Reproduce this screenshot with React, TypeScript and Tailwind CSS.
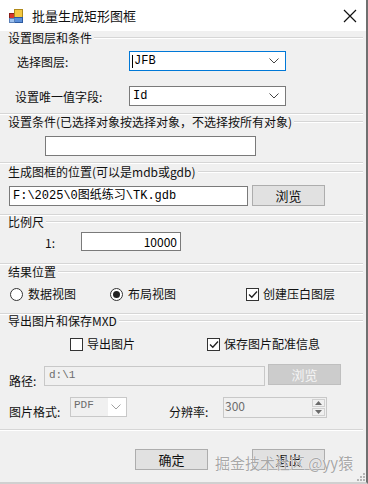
import React from 'react';

const cjk = '"Noto Sans CJK SC", "Noto Sans", sans-serif';
const mono = '"Liberation Mono", "Noto Sans CJK SC", monospace';

const Chevron = ({ color = '#444' }: { color?: string }) => (
  <svg width="10" height="6" viewBox="0 0 10 6" className="shrink-0">
    <path d="M0.5 0.5 L5 5 L9.5 0.5" fill="none" stroke={color} strokeWidth="1" />
  </svg>
);

const Header = ({ title, h = 14 }: { title: string; h?: number }) => (
  <div className="flex items-center" style={{ height: h }}>
    <span className="ml-[8px] mr-[2px] text-[12px] leading-none text-[#111] whitespace-nowrap">{title}</span>
    <div className="flex-1 h-[2px] border-t border-[#d6d6d6] border-b border-b-white mr-[3px]" />
  </div>
);

const Rule = () => <div className="h-[2px] border-t border-[#d6d6d6] border-b border-b-white mr-[3px]" />;

const Radio = ({ on }: { on?: boolean }) => (
  <span className="w-[13px] h-[13px] rounded-full border border-[#333] bg-white flex items-center justify-center shrink-0">
    {on && <span className="w-[7px] h-[7px] rounded-full bg-[#222]" />}
  </span>
);

const Check = ({ on }: { on?: boolean }) => (
  <span className="w-[13px] h-[13px] border border-[#333] bg-white flex items-center justify-center shrink-0">
    {on && (
      <svg width="10" height="9" viewBox="0 0 10 9">
        <path d="M1 4.5 L3.8 7.3 L9 1.5" fill="none" stroke="#222" strokeWidth="1.3" />
      </svg>
    )}
  </span>
);

const Button = ({ label, disabled, className = '' }: { label: string; disabled?: boolean; className?: string }) => (
  <div
    className={`w-[73px] h-[21px] flex items-center justify-center text-[13px] leading-none border ${
      disabled ? 'bg-[#cccccc] border-[#bfbfbf] text-[#f4f4f4]' : 'bg-[#e1e1e1] border-[#adadad] text-[#111]'
    } ${className}`}
  >
    {label}
  </div>
);

export default function App() {
  return (
    <div
      className="w-[368px] h-[484px] bg-[#f0f0f0] flex flex-col relative border-r-2 border-r-[#707070] border-b-2 border-b-[#d0d0d0] overflow-hidden"
      style={{ fontFamily: cjk }}
    >
      {/* title bar */}
      <div className="h-[31px] bg-white flex items-center shrink-0">
        <svg width="14" height="14" viewBox="0 0 14 14" className="ml-[9px]">
          <rect x="0.5" y="4.5" width="5" height="5" fill="#d9362b" stroke="#8a1f18" />
          <rect x="5.5" y="0.5" width="8" height="8" fill="#f4c842" stroke="#b08a1a" />
          <rect x="5.5" y="8.5" width="8" height="5" fill="#5b8fd9" stroke="#2d5aa0" />
          <rect x="0.5" y="9.5" width="5" height="4" fill="#9ec2ef" stroke="#5a80b8" />
        </svg>
        <span className="ml-[9px] text-[13px] leading-none text-[#111]">批量生成矩形图框</span>
        <svg width="14" height="14" viewBox="0 0 14 14" className="ml-auto mr-[9px]">
          <path d="M1 1 L13 13 M13 1 L1 13" stroke="#111" strokeWidth="1.2" />
        </svg>
      </div>

      <Header title="设置图层和条件" />

      <div className="flex items-center h-[20px] mt-[6px]">
        <span className="ml-[17px] mt-[2px] w-[112px] text-[12px] leading-none text-[#111]">选择图层:</span>
        <div className="w-[157px] h-[20px] bg-white border border-[#0078d7] flex items-center pl-[2px] pr-[6px]">
          <span className="w-[1px] h-[13px] bg-black mr-[1px]" />
          <span className="text-[12px] leading-none text-black" style={{ fontFamily: mono }}>JFB</span>
          <span className="ml-auto"><Chevron /></span>
        </div>
      </div>

      <div className="flex items-center h-[20px] mt-[15px]">
        <span className="ml-[15px] mt-[2px] w-[114px] text-[12px] leading-none text-[#111]">设置唯一值字段:</span>
        <div className="w-[157px] h-[20px] bg-white border border-[#7a7a7a] flex items-center pl-[3px] pr-[6px]">
          <span className="text-[12px] leading-none text-black" style={{ fontFamily: mono }}>Id</span>
          <span className="ml-auto"><Chevron /></span>
        </div>
      </div>

      <div className="mt-[7px]"><Rule /></div>
      <Header title="设置条件(已选择对象按选择对象，不选择按所有对象)" />

      <div className="mt-[7px] ml-[45px] w-[211px] h-[20px] bg-white border border-[#7a7a7a]" />

      <div className="mt-[6px]"><Rule /></div>
      <Header title="生成图框的位置(可以是mdb或gdb)" h={16} />

      <div className="flex items-start h-[21px] mt-[5px]">
        <div className="ml-[9px] mt-[1px] w-[239px] h-[20px] bg-white border border-[#7a7a7a] flex items-center pl-[3px]">
          <span className="text-[12px] leading-none text-black whitespace-nowrap" style={{ fontFamily: mono }}>
            F:\2025\0图纸练习\TK.gdb
          </span>
        </div>
        <Button label="浏览" className="ml-[4px]" />
      </div>

      <div className="mt-[8px]"><Rule /></div>
      <Header title="比例尺" h={12} />

      <div className="flex items-center h-[19px] mt-[4px]">
        <span className="ml-[45px] mt-[3px] w-[36px] text-[12px] leading-none text-[#111]">1:</span>
        <div className="w-[100px] h-[19px] bg-white border border-[#7a7a7a] flex items-center justify-end pr-[3px]">
          <span className="text-[12px] leading-none text-black">10000</span>
        </div>
      </div>

      <div className="mt-[12px]"><Rule /></div>
      <Header title="结果位置" />

      <div className="flex items-center h-[14px] mt-[8px] text-[12px] leading-none text-[#111]">
        <span className="ml-[10px]"><Radio /></span>
        <span className="ml-[5px]">数据视图</span>
        <span className="ml-[34px]"><Radio on /></span>
        <span className="ml-[5px]">布局视图</span>
        <span className="ml-[70px]"><Check on /></span>
        <span className="ml-[4px]">创建压白图层</span>
      </div>

      <div className="mt-[12px]"><Rule /></div>
      <Header title="导出图片和保存MXD" h={12} />

      <div className="flex items-center h-[14px] mt-[10px] text-[12px] leading-none text-[#111]">
        <span className="ml-[70px]"><Check /></span>
        <span className="ml-[4px]">导出图片</span>
        <span className="ml-[72px]"><Check on /></span>
        <span className="ml-[4px]">保存图片配准信息</span>
      </div>

      <div className="flex items-start h-[22px] mt-[13px]">
        <span className="ml-[9px] mt-[11px] w-[35px] text-[12px] leading-none text-[#111]">路径:</span>
        <div className="mt-[2px] w-[221px] h-[20px] bg-[#f0f0f0] border border-[#c8c8c8] flex items-start pl-[4px] pt-[3px]">
          <span className="text-[11px] leading-none text-[#6d6d6d]" style={{ fontFamily: mono }}>d:\1</span>
        </div>
        <Button label="浏览" disabled className="ml-[3px]" />
      </div>

      <div className="flex items-center h-[20px] mt-[11px]">
        <span className="ml-[9px] mt-[10px] w-[61px] text-[12px] leading-none text-[#111]">图片格式:</span>
        <div className="w-[57px] h-[20px] bg-white border border-[#c8c8c8] flex items-center pr-[5px]">
          <span className="h-full w-[37px] bg-[#f0f0f0] flex items-start pl-[3px] pt-[2px]">
            <span className="text-[11px] leading-none text-[#6d6d6d]" style={{ fontFamily: mono }}>PDF</span>
          </span>
          <span className="ml-auto"><Chevron color="#a0a0a0" /></span>
        </div>
        <span className="ml-[42px] mt-[10px] w-[54px] text-[12px] leading-none text-[#111]">分辨率:</span>
        <div className="w-[104px] h-[21px] bg-[#f0f0f0] border border-[#c8c8c8] flex items-start">
          <span className="ml-[1px] mt-[2px] text-[12px] leading-none text-[#6d6d6d]">300</span>
          <div className="ml-auto mr-[1px] mt-[1px] w-[13px] h-[17px] flex flex-col">
            <div className="h-[8px] border border-[#d0d0d0] flex items-center justify-center">
              <svg width="7" height="4" viewBox="0 0 7 4"><path d="M0 4 L3.5 0 L7 4 Z" fill="#6a6a6a" /></svg>
            </div>
            <div className="h-[8px] mt-[1px] border border-[#d0d0d0] flex items-center justify-center">
              <svg width="7" height="4" viewBox="0 0 7 4"><path d="M0 0 L3.5 4 L7 0 Z" fill="#6a6a6a" /></svg>
            </div>
          </div>
        </div>
      </div>

      <div className="mt-[12px]"><Rule /></div>

      <div className="flex items-center h-[21px] mt-[18px]">
        <Button label="确定" className="ml-[135px]" />
        <Button label="退出" className="ml-[44px]" />
      </div>

      {/* resize grip */}
      <svg width="8" height="8" viewBox="0 0 8 8" className="absolute right-[1px] bottom-[1px]">
        <rect x="6" y="0" width="2" height="2" fill="#b5b5b5" />
        <rect x="3" y="3" width="2" height="2" fill="#b5b5b5" />
        <rect x="6" y="3" width="2" height="2" fill="#b5b5b5" />
        <rect x="0" y="6" width="2" height="2" fill="#b5b5b5" />
        <rect x="3" y="6" width="2" height="2" fill="#b5b5b5" />
        <rect x="6" y="6" width="2" height="2" fill="#b5b5b5" />
      </svg>

      {/* watermark */}
      <div
        className="absolute left-[215px] top-[455px] text-[15px] leading-none text-[#a8a8a8] whitespace-nowrap"
        style={{ textShadow: '0 0 1px #fff, 0 0 1px #fff' }}
      >
        掘金技术社区 @yy猿
      </div>
    </div>
  );
}
